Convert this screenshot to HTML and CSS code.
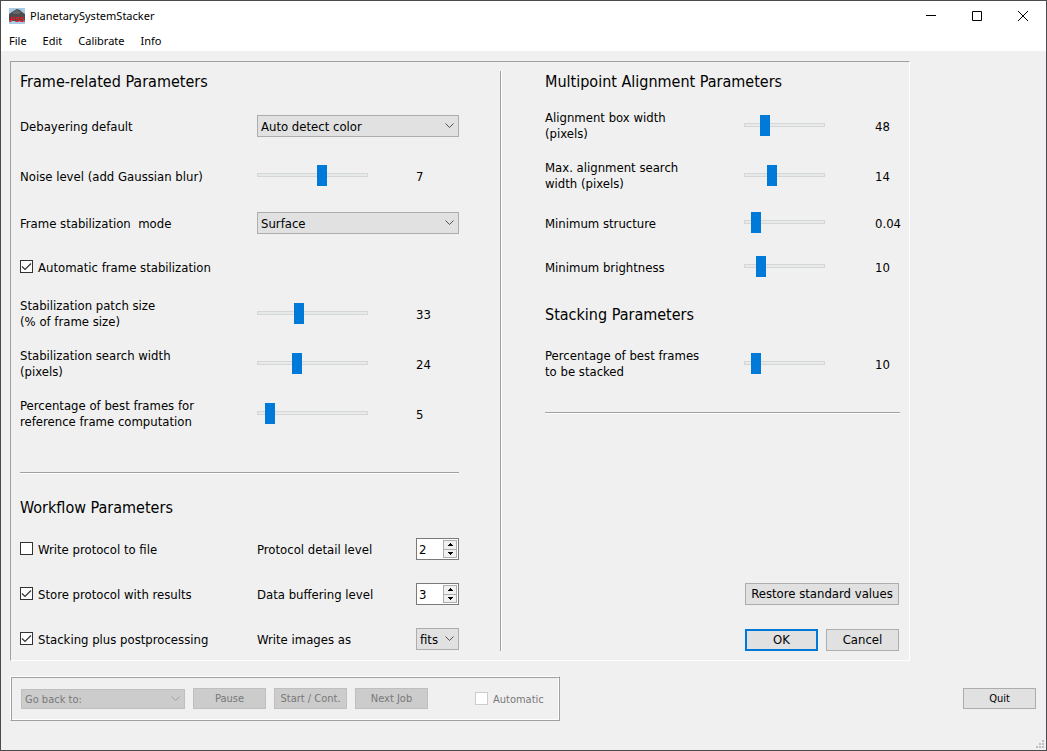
FILE: index.html
```html
<!DOCTYPE html>
<html lang="en">
<head>
<meta charset="utf-8">
<meta name="viewport" content="width=device-width, initial-scale=1">
<title>PlanetarySystemStacker</title>
<link rel="stylesheet" href="styles.css">
</head>
<body>
<div class="window">
  <header class="titlebar">
    <svg class="app-icon" viewBox="0 0 16 16" aria-hidden="true">
      <rect width="16" height="16" fill="#a9cbe6"/>
      <path d="M0 6 3 4 6 2 8 1 11 2 13 4 16 6V12L13 13H3L0 12Z" fill="#4c4c4e"/>
      <path d="M3 4 8 2 12 4 10 6 5 6Z" fill="#66666a"/>
      <path d="M0 12H2V14H0ZM14 12H16V14H14Z" fill="#8a6a70"/>
      <text class="app-icon-text" x="8" y="14" text-anchor="middle">PSS</text>
    </svg>
    <h1 class="title">PlanetarySystemStacker</h1>
    <div class="window-buttons">
      <button class="window-button" type="button" aria-label="Minimize"><svg viewBox="0 0 10 10"><path d="M0 4.5H10"/></svg></button>
      <button class="window-button" type="button" aria-label="Maximize"><svg viewBox="0 0 10 10"><path d="M.5.5H9.5V9.5H.5Z"/></svg></button>
      <button class="window-button" type="button" aria-label="Close"><svg viewBox="0 0 10 10"><path d="M0 0 10 10M10 0 0 10"/></svg></button>
    </div>
  </header>
  <nav class="menubar">
    <button class="menu" type="button">File</button>
    <button class="menu" type="button">Edit</button>
    <button class="menu" type="button">Calibrate</button>
    <button class="menu" type="button">Info</button>
  </nav>

  <main class="content">
    <form class="panel">
      <div class="column column-left">
        <section class="grid params">
          <h2 class="heading">Frame-related Parameters</h2>

          <label class="label" for="debayer">Debayering default</label>
          <div class="combo wide">
            <select class="select" id="debayer"><option>Auto detect color</option></select>
            <svg class="chevron" viewBox="0 0 9 6"><path d="M.5.5 4.5 4.5 8.5.5"/></svg>
          </div>

          <label class="label" for="noise">Noise level (add Gaussian blur)</label>
          <input class="slider" id="noise" type="range" min="1" max="11" value="7">
          <output class="value" for="noise">7</output>

          <label class="label" for="mode">Frame stabilization&nbsp; mode</label>
          <div class="combo wide">
            <select class="select" id="mode"><option>Surface</option></select>
            <svg class="chevron" viewBox="0 0 9 6"><path d="M.5.5 4.5 4.5 8.5.5"/></svg>
          </div>

          <label class="check full"><input class="box" type="checkbox" checked>Automatic frame stabilization</label>

          <label class="label two-line" for="patch">Stabilization patch size<br>(% of frame size)</label>
          <input class="slider" id="patch" type="range" min="5" max="82" value="33">
          <output class="value" for="patch">33</output>

          <label class="label two-line" for="search">Stabilization search width<br>(pixels)</label>
          <input class="slider" id="search" type="range" min="5" max="60" value="24">
          <output class="value" for="search">24</output>

          <label class="label two-line" for="reference">Percentage of best frames for<br>reference frame computation</label>
          <input class="slider" id="reference" type="range" min="1" max="60" value="5">
          <output class="value" for="reference">5</output>
        </section>

        <hr class="rule rule-left">

        <h2 class="heading">Workflow Parameters</h2>
        <section class="grid workflow">
          <label class="check"><input class="box" type="checkbox">Write protocol to file</label>
          <label class="label" for="detail">Protocol detail level</label>
          <div class="spin">
            <input class="spin-input" id="detail" type="number" value="2">
            <div class="spin-buttons">
              <button class="spin-button" type="button" aria-label="Increase detail level"><svg viewBox="0 0 5 3"><path d="M2 0H3V1H4V2H5V3H0V2H1V1H2Z"/></svg></button>
              <button class="spin-button" type="button" aria-label="Decrease detail level"><svg viewBox="0 0 5 3"><path d="M0 0H5V1H4V2H3V3H2V2H1V1H0Z"/></svg></button>
            </div>
          </div>

          <label class="check"><input class="box" type="checkbox" checked>Store protocol with results</label>
          <label class="label" for="buffering">Data buffering level</label>
          <div class="spin">
            <input class="spin-input" id="buffering" type="number" value="3">
            <div class="spin-buttons">
              <button class="spin-button" type="button" aria-label="Increase buffering level"><svg viewBox="0 0 5 3"><path d="M2 0H3V1H4V2H5V3H0V2H1V1H2Z"/></svg></button>
              <button class="spin-button" type="button" aria-label="Decrease buffering level"><svg viewBox="0 0 5 3"><path d="M0 0H5V1H4V2H3V3H2V2H1V1H0Z"/></svg></button>
            </div>
          </div>

          <label class="check"><input class="box" type="checkbox" checked>Stacking plus postprocessing</label>
          <label class="label" for="format">Write images as</label>
          <div class="combo">
            <select class="select" id="format"><option>fits</option></select>
            <svg class="chevron" viewBox="0 0 9 6"><path d="M.5.5 4.5 4.5 8.5.5"/></svg>
          </div>
        </section>
      </div>

      <div class="divider"></div>

      <div class="column column-right">
        <section class="grid params">
          <h2 class="heading">Multipoint Alignment Parameters</h2>

          <label class="label two-line" for="box-width">Alignment box width<br>(pixels)</label>
          <input class="slider" id="box-width" type="range" min="20" max="145" value="48">
          <output class="value" for="box-width">48</output>

          <label class="label two-line" for="search-width">Max. alignment search<br>width (pixels)</label>
          <input class="slider" id="search-width" type="range" min="6" max="31" value="14">
          <output class="value" for="search-width">14</output>

          <label class="label" for="structure">Minimum structure</label>
          <input class="slider" id="structure" type="range" min="0.01" max="0.33" step="0.01" value="0.04">
          <output class="value" for="structure">0.04</output>

          <label class="label" for="brightness">Minimum brightness</label>
          <input class="slider" id="brightness" type="range" min="2" max="52" value="10">
          <output class="value" for="brightness">10</output>

          <h2 class="heading">Stacking Parameters</h2>

          <label class="label two-line" for="stacked">Percentage of best frames<br>to be stacked</label>
          <input class="slider" id="stacked" type="range" min="1" max="106" value="10">
          <output class="value" for="stacked">10</output>
        </section>

        <hr class="rule rule-right">

        <div class="actions">
          <button class="button restore" type="button">Restore standard values</button>
          <button class="button primary" type="submit">OK</button>
          <button class="button" type="button">Cancel</button>
        </div>
      </div>
    </form>

    <div class="footer">
      <div class="job-bar">
        <div class="combo job-combo">
          <select class="select" aria-label="Go back to" disabled><option>Go back to:</option></select>
          <svg class="chevron" viewBox="0 0 9 6"><path d="M.5.5 4.5 4.5 8.5.5"/></svg>
        </div>
        <button class="button small" type="button" disabled>Pause</button>
        <button class="button small" type="button" disabled>Start / Cont.</button>
        <button class="button small" type="button" disabled>Next Job</button>
        <label class="check automatic"><input class="box" type="checkbox" disabled>Automatic</label>
      </div>
      <button class="button small" type="button">Quit</button>
    </div>
  </main>

  <div class="statusbar">
    <svg class="grip" viewBox="0 0 8 8" aria-hidden="true"><path d="M6 0h2v2H6zM3 3h2v2H3zM6 3h2v2H6zM0 6h2v2H0zM3 6h2v2H3zM6 6h2v2H6z"/></svg>
  </div>
</div>
</body>
</html>
```
FILE: styles.css
```css
* {
  box-sizing: border-box;
}

body {
  margin: 0;
  color: #000;
  font: 13px/16px "DejaVu Sans Condensed", "Noto Sans", sans-serif;
}

button,
input,
select {
  margin: 0;
  padding: 0;
  border: 0;
  border-radius: 0;
  color: inherit;
  font: inherit;
}

.window {
  display: flex;
  flex-direction: column;
  min-height: 100vh;
  border: 1px solid #4b4b4d;
  background: #f0f0f0;
}

/* Title bar and menus */

.titlebar {
  display: flex;
  align-items: center;
  height: 29px;
  padding-left: 8px;
  background: #fff;
}

.app-icon {
  width: 16px;
  height: 16px;
}

.app-icon-text {
  fill: #f01020;
  font: bold 7px "Liberation Sans", sans-serif;
}

.title {
  flex: 1;
  margin: 0 0 0 5px;
  font: 11px/16px "Noto Sans", sans-serif;
}

.window-buttons {
  display: flex;
}

.window-button {
  display: grid;
  place-items: center;
  width: 46px;
  height: 29px;
  background: none;
}

.window-button svg {
  width: 10px;
  height: 10px;
  fill: none;
  stroke: #000;
}

.menubar {
  display: flex;
  gap: 16px;
  height: 21px;
  padding: 0 8px;
  background: #fff;
}

.menu {
  background: none;
  font: 11px/22px "Noto Sans", sans-serif;
}

/* Settings panel */

.content {
  display: flex;
  flex: 1;
  flex-direction: column;
  gap: 15px;
  padding: 10px 10px 0 9px;
}

.panel {
  display: flex;
  flex: 1;
  margin-right: 126px;
  padding: 9px;
  border: 1px solid;
  border-color: #a0a0a0 #fff #fff #a0a0a0;
}

.column {
  display: flex;
  flex-direction: column;
}

.column-left {
  flex: 439;
}

.column-right {
  flex: 355;
}

.divider {
  width: 2px;
  margin: 0 43px 0 41px;
  border-left: 1px solid #a0a0a0;
  background: #fff;
}

.grid {
  display: grid;
  align-items: center;
}

.params {
  grid-template-rows: 21px 32px 32px 26px 26px 32px 32px;
  grid-auto-rows: 32px;
  row-gap: 18px;
}

.workflow {
  grid-auto-rows: 22px;
  row-gap: 23px;
  margin-top: 20px;
}

.column-left .grid {
  grid-template-columns: 237fr 159fr 43px;
}

.column-right .grid {
  grid-template-columns: 199fr 131fr 25px;
}

.heading {
  grid-column: 1 / -1;
  margin: 0;
  font-size: 16px;
  font-weight: normal;
  line-height: 21px;
}

.label,
.value {
  padding-top: 2px;
  white-space: nowrap;
}

.two-line {
  padding-top: 0;
}

.wide {
  grid-column: 2 / -1;
}

.full {
  grid-column: 1 / -1;
}

.rule {
  width: 100%;
  height: 2px;
  margin: 0;
  border: 0;
  border-top: 1px solid #a0a0a0;
  background: #fff;
}

.rule-left {
  margin: 42px 0 23px;
}

.rule-right {
  margin-top: 32px;
}

/* Controls */

.combo {
  display: grid;
  align-items: center;
  height: 22px;
}

.select,
.chevron {
  grid-area: 1 / 1;
}

.select {
  width: 100%;
  height: 100%;
  padding: 2px 3px 0;
  border: 1px solid #adadad;
  appearance: none;
  background: #e1e1e1;
}

.chevron {
  justify-self: end;
  width: 9px;
  height: 6px;
  margin-right: 5px;
  fill: none;
  pointer-events: none;
  stroke: #505050;
}

.slider {
  width: 111px;
  height: 21px;
  margin-bottom: 2px;
  appearance: none;
  background: none;
}

.column-right .slider {
  width: 81px;
}

.slider::-webkit-slider-runnable-track {
  height: 4px;
  border: 1px solid #d6d6d6;
  background: #e7eaea;
}

.slider::-webkit-slider-thumb {
  width: 10px;
  height: 21px;
  margin-top: -9px;
  appearance: none;
  background: #007ad9;
}

.check {
  display: flex;
  align-items: center;
  gap: 5px;
  padding-top: 2px;
  white-space: nowrap;
}

.box {
  flex: none;
  width: 13px;
  height: 13px;
  margin-bottom: 3px;
  border: 1px solid #333;
  appearance: none;
  background: #fff;
}

.box:checked {
  background: #fff url("data:image/svg+xml,%3Csvg xmlns='http://www.w3.org/2000/svg' viewBox='0 0 11 11'%3E%3Cpath d='M1 5.5 4 8.500 10 2.500' fill='none' stroke='%23333' stroke-width='1.200'/%3E%3C/svg%3E");
}

.spin {
  display: flex;
  height: 22px;
  padding: 1px;
  border: 1px solid #7a7a7a;
  background: #fff;
}

.spin-input {
  flex: 1;
  min-width: 0;
  padding: 2px 0 0 1px;
  appearance: textfield;
  background: none;
}

.spin-input::-webkit-inner-spin-button {
  appearance: none;
}

.spin-buttons {
  display: grid;
  width: 14px;
}

.spin-button {
  display: grid;
  place-items: center;
  border: 1px solid #adadad;
  background: #f0f0f0;
}

.spin-button + .spin-button {
  border-top: 0;
}

.spin-button svg {
  width: 5px;
  height: 3px;
}

.button {
  height: 22px;
  border: 1px solid #adadad;
  background: #e1e1e1;
  white-space: nowrap;
}

.primary {
  border: 2px solid #0078d7;
}

.actions {
  display: grid;
  grid-template-columns: 73px 73px;
  gap: 24px 8px;
  align-self: end;
  margin: auto 1px 0 0;
}

.restore {
  grid-column: 1 / -1;
}

/* Job controls */

.footer {
  display: flex;
  align-items: center;
  justify-content: space-between;
  font-size: 11px;
}

.job-bar {
  display: flex;
  align-items: center;
  gap: 8px;
  padding: 11px 15px 11px 10px;
  border: 1px solid;
  border-color: #fff #a0a0a0 #a0a0a0 #fff;
  box-shadow: inset 1px 1px #a0a0a0, inset -1px -1px #fff;
}

.small {
  width: 73px;
  height: 21px;
}

.job-combo {
  width: 164px;
  height: 20px;
}

.job-combo .chevron {
  stroke: #a0a0a0;
}

.button:disabled,
.select:disabled {
  border-color: #bfbfbf;
  background: #ccc;
  color: #787878;
  opacity: 1;
}

.automatic {
  margin-left: 39px;
  color: #787878;
}

.box:disabled {
  border-color: #ccc;
}

.statusbar {
  display: flex;
  align-items: end;
  justify-content: end;
  height: 29px;
  padding: 2px;
}

.grip {
  width: 8px;
  height: 8px;
  fill: #bfbfbf;
}
```
